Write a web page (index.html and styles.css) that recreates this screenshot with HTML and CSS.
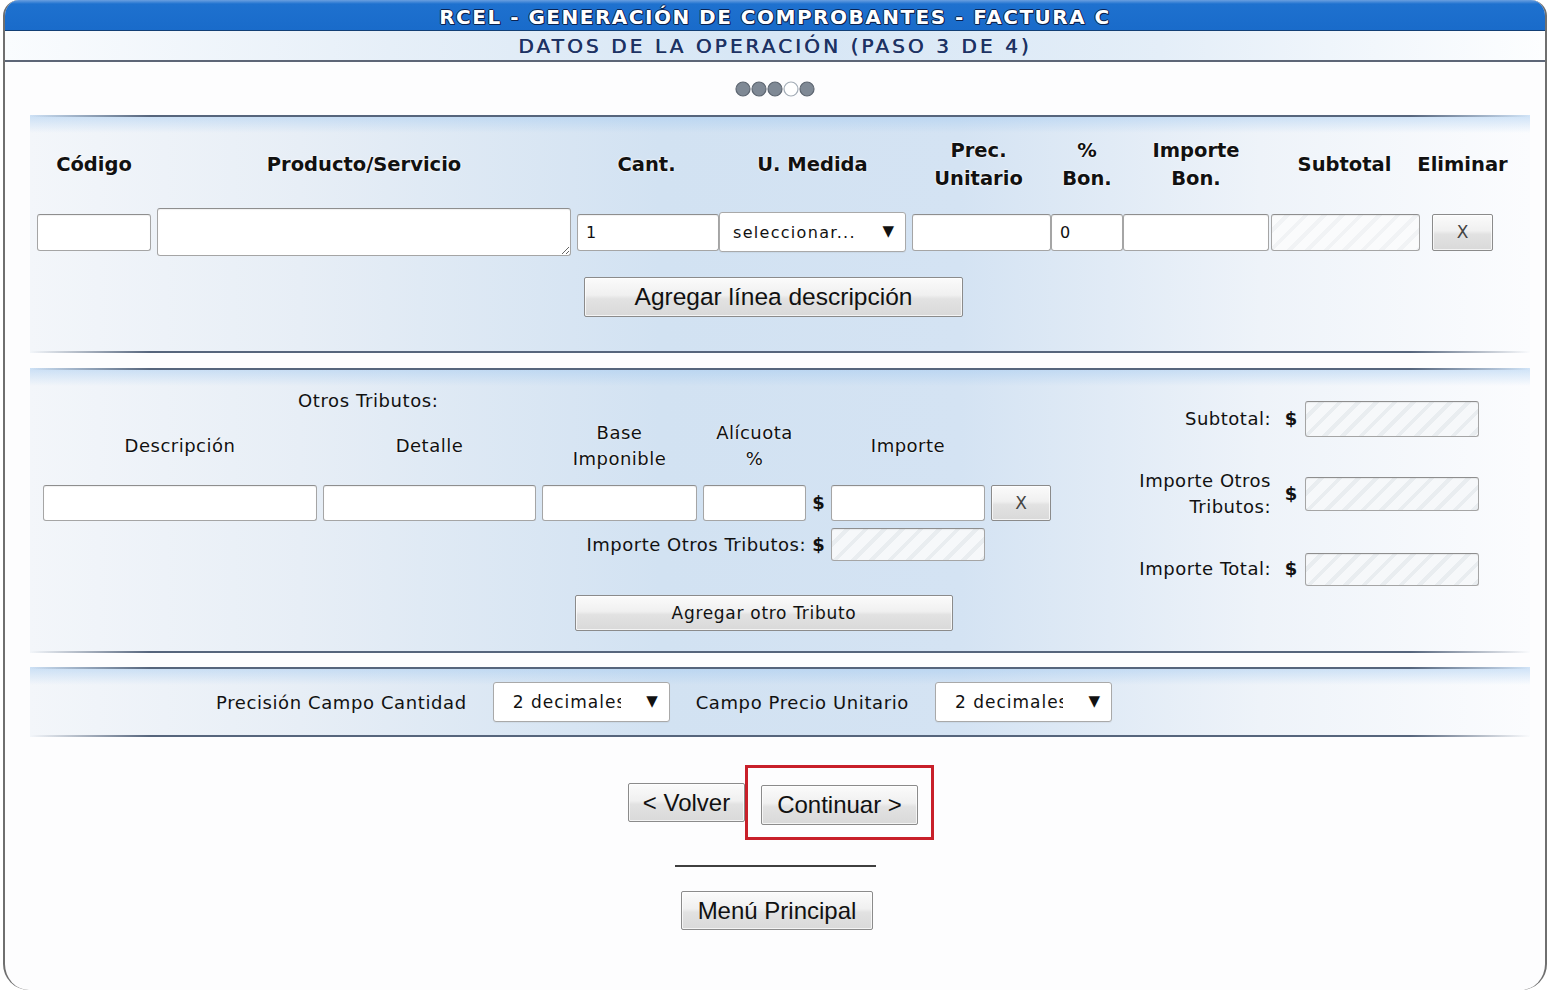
FILE: index.html
```html
<!DOCTYPE html>
<html lang="es">
<head>
<meta charset="utf-8">
<title>RCEL - Generación de Comprobantes</title>
<link rel="stylesheet" href="styles.css">
</head>
<body>
<div class="frame">
  <header class="titlebar"><h1>RCEL - GENERACIÓN DE COMPROBANTES - FACTURA C</h1></header>
  <div class="subtitle"><h2>DATOS DE LA OPERACIÓN (PASO 3 DE 4)</h2></div>

  <div class="steps">
    <svg width="82" height="18" viewBox="0 0 82 18" aria-hidden="true">
      <circle cx="9" cy="9" r="7" class="dot"/>
      <circle cx="25" cy="9" r="7" class="dot"/>
      <circle cx="41" cy="9" r="7" class="dot"/>
      <circle cx="57" cy="9" r="7" class="dot dot-current"/>
      <circle cx="73" cy="9" r="7" class="dot"/>
    </svg>
  </div>

  <section class="band items">
    <div class="items-grid">
      <div class="hd"><span>Código</span></div>
      <div class="hd"><span>Producto/Servicio</span></div>
      <div class="hd"><span>Cant.</span></div>
      <div class="hd"><span>U. Medida</span></div>
      <div class="hd"><span>Prec.<br>Unitario</span></div>
      <div class="hd"><span>%<br>Bon.</span></div>
      <div class="hd"><span>Importe<br>Bon.</span></div>
      <div class="hd"><span>Subtotal</span></div>
      <div class="hd"><span>Eliminar</span></div>

      <input class="fld f-cod" type="text">
      <textarea class="fld f-prod"></textarea>
      <input class="fld f-cant" type="text" value="1">
      <span class="sel-wrap f-um"><select class="sel sel-um"><option>seleccionar...</option></select></span>
      <input class="fld f-prec" type="text">
      <input class="fld f-bon" type="text" value="0">
      <input class="fld f-impbon" type="text">
      <input class="fld ro ro-faint f-sub" type="text" readonly>
      <button class="btn btn-x f-del" type="button">X</button>
    </div>
    <div class="add-row"><button class="btn btn-add" type="button">Agregar línea descripción</button></div>
  </section>

  <section class="band taxes">
    <div class="taxes-left">
      <div class="caption">Otros Tributos:</div>
      <div class="taxes-grid">
        <div class="th g">Descripción</div>
        <div class="th g">Detalle</div>
        <div class="th g">Base<br>Imponible</div>
        <div class="th">Alícuota<br>%</div>
        <div class="th"></div>
        <div class="th g">Importe</div>
        <div class="th"></div>

        <div class="td g"><input class="fld t-in" type="text"></div>
        <div class="td g"><input class="fld t-in" type="text"></div>
        <div class="td g"><input class="fld t-in" type="text"></div>
        <div class="td"><input class="fld t-in" type="text"></div>
        <div class="td cur">$</div>
        <div class="td g"><input class="fld t-in" type="text"></div>
        <div class="td"><button class="btn btn-x t-del" type="button">X</button></div>

        <div class="tot-label">Importe Otros Tributos:</div>
        <div class="td cur cur-sm">$</div>
        <div class="td g t-total"><input class="fld ro t-in2" type="text" readonly></div>
      </div>
      <button class="btn btn-tax" type="button">Agregar otro Tributo</button>
    </div>

    <div class="totals">
      <div class="lbl">Subtotal:</div>
      <div class="cur">$</div>
      <input class="fld ro tot-in h36" type="text" readonly>

      <div class="lbl">Importe Otros<br>Tributos:</div>
      <div class="cur">$</div>
      <input class="fld ro tot-in h34" type="text" readonly>

      <div class="lbl">Importe Total:</div>
      <div class="cur">$</div>
      <input class="fld ro tot-in h33" type="text" readonly>
    </div>
  </section>

  <section class="band precision">
    <label class="plabel">Precisión Campo Cantidad</label>
    <span class="sel-wrap dec"><select class="sel sel-dec"><option>2 decimales</option></select></span>
    <label class="plabel">Campo Precio Unitario</label>
    <span class="sel-wrap dec"><select class="sel sel-dec"><option>2 decimales</option></select></span>
  </section>

  <div class="nav">
    <button class="btn btn-nav btn-back" type="button">&lt; Volver</button>
    <div class="highlight"><button class="btn btn-nav btn-cont" type="button">Continuar &gt;</button></div>
  </div>

  <hr class="sep">

  <div class="menu"><button class="btn btn-nav btn-menu" type="button">Menú Principal</button></div>
</div>
</body>
</html>
```
FILE: styles.css
```css
html, body {
  margin: 0;
  background: #ffffff;
}

body {
  font-family: "DejaVu Sans", sans-serif;
  color: #111;
  overflow: hidden;
}

/* outer window frame */
.frame {
  margin: 0 3px;
  height: 990px;
  box-sizing: border-box;
  border: 2px solid #6f6f6f;
  border-top: 0;
  border-bottom: 0;
  border-radius: 16px 16px 26px 26px;
  overflow: hidden;
  background: #fdfdfe;
}

/* title bar */
.titlebar {
  height: 31px;
  box-sizing: border-box;
  padding-top: 3px;
  background: linear-gradient(#6a9fe0 0, #1e71cf 4px, #196bca 100%);
  border-bottom: 1px solid #123f75;
  display: flex;
  align-items: center;
  justify-content: center;
}

.titlebar h1 {
  margin: 0;
  font: bold 20px/1 "DejaVu Sans", sans-serif;
  letter-spacing: 1.5px;
  color: #ffffff;
  text-shadow: 1px 0 0 #0b2350, -1px 0 0 #0b2350, 0 1px 0 #0b2350, 0 -1px 0 #0b2350, 1px 1px 0 #0b2350;
}

.subtitle {
  height: 31px;
  box-sizing: border-box;
  border-bottom: 2px solid #5d6677;
  background: linear-gradient(to right, #fafcfe 0%, #e6eff8 25%, #d6e6f5 50%, #e4eef8 75%, #fdfeff 100%);
  display: flex;
  align-items: center;
  justify-content: center;
}

.subtitle h2 {
  margin: 0;
  font: 20px/1 "DejaVu Sans", sans-serif;
  letter-spacing: 3.1px;
  color: #1d3263;
  text-shadow: 0.5px 0 0 #1d3263;
}

/* step indicator */
.steps {
  height: 53px;
  display: flex;
  align-items: center;
  justify-content: center;
}

.dot {
  fill: #7f8995;
  stroke: #5d6671;
  stroke-width: 1.2;
}

.dot-current {
  fill: #ffffff;
  stroke: #a3acb6;
}

/* shaded form bands */
.band {
  margin: 0 15px 0 25px;
  background:
    linear-gradient(to right, rgba(86, 101, 124, 0) 0, #56657c 8%, #56657c 92%, rgba(86, 101, 124, 0) 100%) top / 100% 2px no-repeat,
    linear-gradient(to right, rgba(86, 101, 124, 0) 0, #56657c 8%, #56657c 92%, rgba(86, 101, 124, 0) 100%) bottom / 100% 2px no-repeat,
    linear-gradient(to bottom, rgba(160, 200, 240, 0.45) 2px, rgba(190, 215, 240, 0) 18px),
    linear-gradient(to right, #f3f6fa 0%, #e7eef6 18%, #d2e2f2 42%, #d4e3f3 62%, #eef3f9 82%, #fbfcfe 100%);
}

/* ----- item lines ----- */
.items {
  padding: 22px 0 36px 4px;
}

.items-grid {
  display: grid;
  grid-template-columns: 120px 420px 145px 187px 145px 72px 146px 151px 85px;
  grid-template-rows: 56px 52px;
  row-gap: 13px;
  align-items: center;
}

.hd {
  display: flex;
  justify-content: center;
  align-items: center;
  height: 56px;
  font: bold 19.5px/28px "DejaVu Sans", sans-serif;
  text-align: center;
  white-space: nowrap;
  color: #111;
  text-shadow: 0 0 2px #fff, 0 0 2px #fff;
}

.fld {
  box-sizing: border-box;
  height: 37px;
  margin: 0;
  padding: 0 8px;
  border: 1px solid #a5a5a5;
  border-top-color: #8e8e8e;
  border-radius: 3px;
  background: #ffffff;
  font: 16px "DejaVu Sans", sans-serif;
  color: #111;
  outline: none;
  box-shadow: inset 0 1px 1px rgba(0, 0, 0, 0.06);
}

.ro {
  background: repeating-linear-gradient(135deg, #f6f8fa 0 9px, #e9edf0 9px 13px);
}

.ro-faint {
  background: repeating-linear-gradient(135deg, #fafbfc 0 9px, #f1f3f5 9px 13px);
}

.f-cod { width: 114px; justify-self: center; }
.f-prod { width: 414px; height: 48px; justify-self: center; resize: both; padding: 6px 8px; }
.f-cant { width: 142px; justify-self: end; }
.f-um { width: 187px; }
.f-prec { width: 139px; justify-self: end; }
.f-bon { width: 72px; }
.f-impbon { width: 146px; }
.f-sub { width: 149px; justify-self: end; }
.f-del { justify-self: center; }

/* selects */
.sel-wrap {
  position: relative;
  display: inline-block;
}

.sel-wrap::after {
  content: "▼";
  position: absolute;
  right: 12px;
  top: 50%;
  transform: translateY(-58%);
  font: 15px "DejaVu Sans", sans-serif;
  color: #111;
  pointer-events: none;
}

.sel {
  -webkit-appearance: none;
  appearance: none;
  box-sizing: border-box;
  height: 40px;
  margin: 0;
  border: 1px solid #a9a9a9;
  border-radius: 3px;
  background: #ffffff;
  color: #111;
  outline: none;
  box-shadow: 0 1px 1px rgba(0, 0, 0, 0.05);
}

.sel-um {
  width: 187px;
  padding: 0 40px 0 13px;
  font: 16px "DejaVu Sans", sans-serif;
  letter-spacing: 1.3px;
}

.sel-dec {
  width: 177px;
  padding: 0 48px 0 19px;
  font: 17px "DejaVu Sans", sans-serif;
  letter-spacing: 1px;
}

/* buttons */
.btn {
  box-sizing: border-box;
  margin: 0;
  padding: 0;
  font-family: "Liberation Sans", Arial, sans-serif;
  color: #111;
  border: 1px solid #8b8b8b;
  border-radius: 2px;
  background: linear-gradient(#fbfbfb 0%, #f0f0f0 45%, #e2e2e2 55%, #d9d9d9 100%);
  box-shadow: inset 0 0 0 1px rgba(255, 255, 255, 0.7);
  cursor: pointer;
}

.btn-x {
  width: 61px;
  height: 37px;
  font: 17px "DejaVu Sans", sans-serif;
  color: #444;
}

.add-row {
  margin-top: 19px;
  padding-left: 550px;
}

.btn-add {
  width: 379px;
  height: 40px;
  font-size: 24.5px;
}

/* ----- other taxes ----- */
.taxes {
  margin-top: 15px;
  display: flex;
  align-items: flex-start;
}

.taxes-left {
  width: 1008px;
  padding: 22px 0 22px 13px;
}

.caption {
  height: 22px;
  line-height: 22px;
  padding-left: 255px;
  font-size: 18px;
  letter-spacing: 0.6px;
}

.taxes-grid {
  margin-top: 8px;
  display: grid;
  grid-template-columns: 280px 219px 161px 103px 25px 160px 60px;
  grid-template-rows: 65px 43px 33px;
  align-items: start;
}

.th {
  box-sizing: border-box;
  height: 52px;
  display: flex;
  align-items: center;
  justify-content: center;
  text-align: center;
  font-size: 18px;
  line-height: 26px;
  letter-spacing: 0.5px;
  white-space: nowrap;
  text-shadow: 0 0 2px #fff;
}

.td {
  box-sizing: border-box;
}

.g {
  padding-right: 6px;
}

.t-in {
  width: 100%;
  height: 36px;
}

.t-del {
  width: 60px;
  height: 36px;
}

.cur {
  font: bold 18px "DejaVu Sans", sans-serif;
  text-align: center;
  line-height: 36px;
}

.cur-sm {
  line-height: 33px;
}

.tot-label {
  grid-column: 1 / 5;
  text-align: right;
  height: 33px;
  line-height: 33px;
  font-size: 18px;
  letter-spacing: 0.5px;
}

.t-total {
  grid-column: 6;
}

.t-in2 {
  width: 100%;
  height: 33px;
}

.btn-tax {
  margin: 34px 0 0 532px;
  width: 378px;
  height: 36px;
  font: 17px "DejaVu Sans", sans-serif;
  letter-spacing: 0.7px;
}

.totals {
  padding-top: 26px;
  display: grid;
  grid-template-columns: 220px 34px 174px;
  grid-auto-rows: 50px;
  row-gap: 25px;
  align-items: center;
}

.totals .lbl {
  text-align: right;
  font-size: 18px;
  line-height: 26px;
  letter-spacing: 0.5px;
}

.totals .cur {
  padding-left: 6px;
}

.tot-in { width: 174px; }
.h36 { height: 36px; }
.h34 { height: 34px; }
.h33 { height: 33px; }

/* ----- precision ----- */
.precision {
  margin-top: 14px;
  height: 70px;
  display: flex;
  align-items: center;
  padding-left: 186px;
}

.plabel {
  font-size: 18px;
  letter-spacing: 0.6px;
  white-space: nowrap;
}

.dec {
  margin: 0 26px;
}

/* ----- navigation ----- */
.nav {
  margin-top: 28px;
  display: flex;
  align-items: center;
  justify-content: center;
  padding-left: 12px;
}

.btn-nav {
  height: 39px;
  font-size: 24px;
}

.btn-back {
  width: 117px;
}

.highlight {
  border: 3px solid #c8202a;
  padding: 17px 13px 12px 13px;
}

.btn-cont {
  width: 157px;
  height: 40px;
}

.sep {
  width: 201px;
  height: 2px;
  margin: 25px auto 0;
  border: 0;
  background: #3f3f3f;
}

.menu {
  margin-top: 24px;
  display: flex;
  justify-content: center;
  padding-left: 4px;
}

.btn-menu {
  width: 192px;
}
```
